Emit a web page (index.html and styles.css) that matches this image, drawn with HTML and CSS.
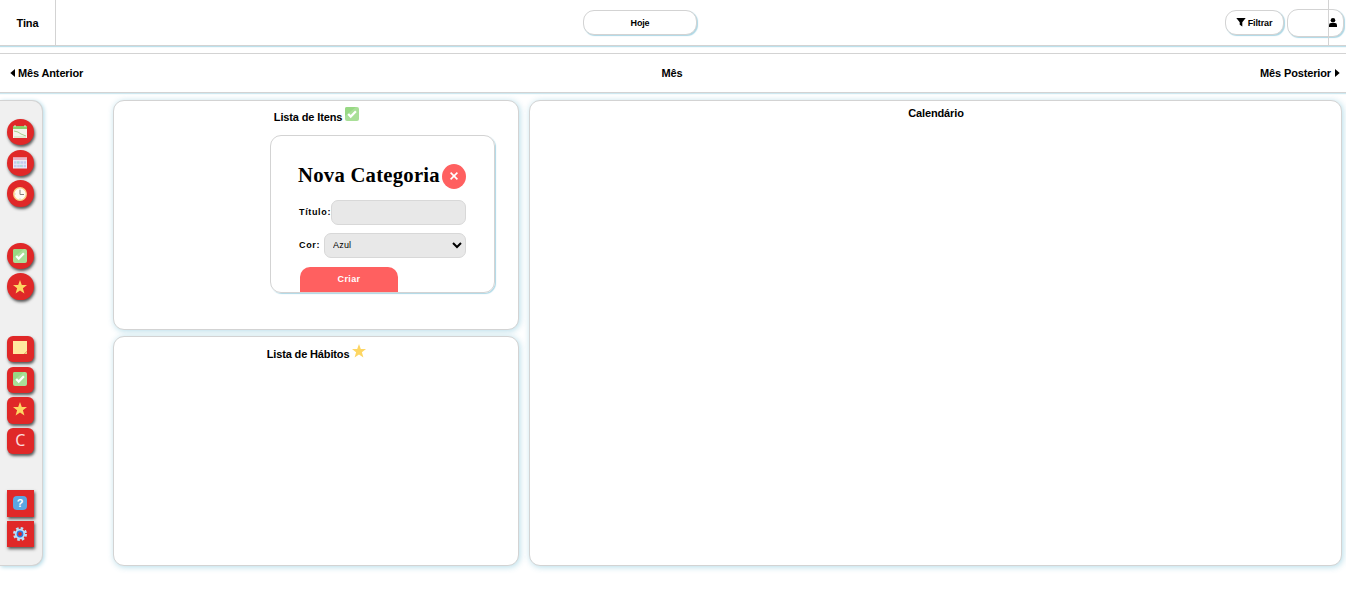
FILE: index.html
```html
<!DOCTYPE html>
<html lang="pt-BR">
<head>
<meta charset="utf-8">
<title>Agenda</title>
<link rel="stylesheet" href="styles.css">
</head>
<body>
<svg class="defs" aria-hidden="true">
  <symbol id="star" viewBox="0 0 14 14"><path fill="#fdd663" d="M7 0l1.800 4.900 5.200.2-4.100 3.200 1.500 5.200L7 10.500l-4.400 3 1.500-5.200L0 5.100l5.200-.2z"/></symbol>
  <symbol id="check" viewBox="0 0 14 14"><rect width="14" height="14" rx="2" fill="#a9df98"/><path d="M0 2a2 2 0 0 1 2-2h9L0 9z" fill="#98d884"/><path d="M3.200 7l2.500 2.600 5.200-5.400" fill="none" stroke="#fff" stroke-width="2.200"/></symbol>
</svg>
<header class="topbar">
  <div class="user">Tina</div>
  <button class="pill today">Hoje</button>
  <div class="actions">
    <button class="pill filter"><svg width="10" height="9" viewBox="0 0 10 9"><path d="M.3 0h9.400L6.300 4.200V8.500L3.700 6.800v-2.600z"/></svg>Filtrar</button>
    <button class="pill profile"><svg width="8" height="9" viewBox="0 0 8 9"><circle cx="4" cy="2.300" r="2.300"/><path d="M0 9V7.200Q0 5.200 2 5.100h4Q8 5.200 8 7.200V9z"/></svg></button>
    <span class="divider"></span>
  </div>
</header>
<nav class="months">
  <span class="prev"><svg width="5" height="8" viewBox="0 0 5 8"><path d="M5 0v8L.3 4z"/></svg>Mês Anterior</span>
  <span class="current">Mês</span>
  <span class="next">Mês Posterior<svg width="5" height="8" viewBox="0 0 5 8"><path d="M0 0v8l4.700-4z"/></svg></span>
</nav>
<main class="workspace">
  <aside class="sidebar">
    <div class="group">
      <button class="tool round"><svg viewBox="0 0 14 14"><path fill="#f4f4ec" d="M0 2h14v11H0z"/><path fill="#8bcf6b" d="M0 1h14v3H0z"/><path d="M2 0v2M12 0v2" stroke="#dceecb"/><path d="M1 6l4 1 3 2 5 2" fill="none" stroke="#a9d18d"/><path d="M1 12h12" stroke="#c9e3b4"/></svg></button>
      <button class="tool round"><svg viewBox="0 0 14 14"><path fill="#eceaf5" d="M0 1.500h14v11H0z"/><path fill="#e9b3c7" d="M0 1.500h14v2.500H0z"/><path d="M1 6.500h12M1 10h12" stroke="#c3cbef" stroke-width="2.400" stroke-dasharray="2.600 .6"/><path d="M4 5.500h2v2H4zM7 9h2v2H7z" fill="#aee0d9"/></svg></button>
      <button class="tool round"><svg viewBox="0 0 14 14"><circle cx="7" cy="7" r="6.300" fill="#fffaf0" stroke="#fbd184" stroke-width="1.300"/><path d="M7 3v4.500h4" fill="none" stroke="#88817d"/><path d="M7 1.500v1M7 11.500v1M1.500 7h1" stroke="#c4b9ac"/></svg></button>
    </div>
    <div class="group">
      <button class="tool round"><svg><use href="#check"/></svg></button>
      <button class="tool round"><svg><use href="#star"/></svg></button>
    </div>
    <div class="group">
      <button class="tool soft"><svg viewBox="0 0 14 14"><path fill="#ffe99f" d="M0 0h14v10l-3 3H0z"/><path fill="#e8d07f" d="M14 10v3h-3z"/></svg></button>
      <button class="tool soft"><svg><use href="#check"/></svg></button>
      <button class="tool soft"><svg><use href="#star"/></svg></button>
      <button class="tool soft letter">C</button>
    </div>
    <div class="group">
      <button class="tool"><svg viewBox="0 0 14 14"><rect width="14" height="14" rx="4" fill="#5ba7e2"/><text x="7" y="11" class="question">?</text></svg></button>
      <button class="tool"><svg viewBox="0 0 14 14"><circle cx="7" cy="7" r="5.800" fill="none" stroke="#b9e2fa" stroke-width="2.400" stroke-dasharray="2.500 2.055"/><circle cx="7" cy="7" r="4.300" fill="#2f78e0" stroke="#b9e2fa" stroke-width="1.800"/><circle cx="7" cy="7" r="1.900" fill="#e02828"/></svg></button>
    </div>
  </aside>
  <div class="lists">
    <section class="panel items">
      <h2 class="title">Lista de Itens <svg class="emoji"><use href="#check"/></svg></h2>
      <form class="dialog">
        <div class="dialog-head"><h1 class="heading">Nova Categoria</h1><button type="button" class="close"><svg width="8" height="8" viewBox="0 0 8 8"><path d="M.6.6l6.800 6.800M7.400.6L.6 7.400" stroke="#fff" stroke-width="1.600"/></svg></button></div>
        <label class="field"><span>Título:</span><input class="control" type="text"></label>
        <label class="field color"><span>Cor:</span><select class="control"><option>Azul</option></select></label>
        <button type="button" class="create">Criar</button>
      </form>
    </section>
    <section class="panel habits">
      <h2 class="title">Lista de Hábitos <svg class="emoji"><use href="#star"/></svg></h2>
    </section>
  </div>
  <section class="panel calendar"><h2 class="title">Calendário</h2></section>
</main>
</body>
</html>
```

FILE: styles.css
```css
* { box-sizing: border-box; }
body {
  margin: 0;
  height: 604px;
  overflow: hidden;
  background: #fff;
  color: #000;
  font: bold 11px/13px "Liberation Sans", Arial, sans-serif;
  letter-spacing: -.14px;
}
button { font: inherit; color: inherit; letter-spacing: inherit; padding: 0; border: 0; }
svg { flex: none; }
.defs { display: none; }

.topbar {
  display: grid;
  grid-template-columns: 56px 1fr 121px;
  height: 46px;
  border-bottom: 1px solid lightgray;
  box-shadow: 0 1px 1px rgba(173, 216, 230, .8);
}
.user {
  display: flex;
  align-items: center;
  justify-content: center;
  padding-top: 2px;
  border-right: 1px solid lightgray;
}
.pill {
  display: flex;
  align-items: center;
  justify-content: center;
  height: 25px;
  border: 1px solid lightgray;
  border-radius: 11px;
  background: #fff;
  box-shadow: 1px 1px 1px lightblue;
  font-size: 9px;
}
.today { width: 114px; margin: 10px 0 0 527px; padding-top: 1px; }
.actions { position: relative; display: flex; gap: 3px; }
.filter { width: 59px; margin-top: 10px; padding: 1px 1px 0 0; gap: 2px; }
.filter svg { margin-top: -2px; }
.profile {
  width: 57px;
  height: 28px;
  margin-top: 9px;
  justify-content: flex-end;
  padding: 0 6px 2px 0;
}
.divider {
  position: absolute;
  top: 0;
  right: 17px;
  width: 1px;
  height: 45px;
  background: lightgray;
}

.months {
  display: grid;
  grid-template-columns: 1fr auto 1fr;
  align-items: center;
  height: 40px;
  margin-top: 7px;
  padding: 0 6px 0 10px;
  border: solid lightgray;
  border-width: 1px 0;
  box-shadow: 0 1px 1px rgba(173, 216, 230, .6);
}
.months svg { margin-right: 3px; }
.next { text-align: right; }
.months .next svg { margin: 0 0 0 4px; }
.current { position: relative; left: -3px; }

.workspace {
  display: flex;
  height: 466px;
  margin-top: 7px;
}
.sidebar {
  display: flex;
  flex-direction: column;
  gap: 36px;
  width: 43px;
  padding: 18px 0 0 7px;
  border: 1px solid lightgray;
  border-left: 0;
  border-radius: 0 11px 11px 0;
  background: #f0f0f0;
  box-shadow: 1px 1px 4px lightblue;
}
.group { display: grid; row-gap: 4.300px; }
.tool {
  display: flex;
  align-items: center;
  justify-content: center;
  width: 26.600px;
  height: 26.400px;
  background: #e02828;
  box-shadow: 1px 2px 3px #555;
}
.tool svg { width: 14px; height: 14px; }
.round { border-radius: 50%; }
.soft { border-radius: 6px; }
.soft svg { margin-top: -2px; }
.letter { color: #fbdada; font: 16px/24px "Noto Sans", sans-serif; padding-bottom: 3px; }
.question { fill: #fff; font: bold 11px "Liberation Sans", sans-serif; text-anchor: middle; }

.lists {
  display: grid;
  grid-template-rows: 230px 230px;
  row-gap: 6px;
  margin-left: 70px;
  width: 406px;
}
.calendar { width: 813px; margin-left: 10px; }
.panel {
  border: 1px solid lightgray;
  border-radius: 11px;
  background: #fff;
  box-shadow: 1px 1px 6px rgba(173, 216, 230, .9);
}
.title { margin: 0; font: inherit; text-align: center; }
.emoji { width: 14px; height: 14px; }
.items .title { padding: 6px 0 0 1px; }
.habits .title { padding: 7px 0 0 1px; }
.calendar .title { padding: 6px 0 0 1px; }

.dialog {
  width: 225px;
  height: 158px;
  margin: 11px 0 0 156px;
  padding: 27px 28px 0 27px;
  border: 1px solid lightgray;
  border-radius: 11px;
  box-shadow: 1px 1px 1px lightblue;
  font-size: 9px;
  letter-spacing: .65px;
}
.dialog-head { display: flex; justify-content: space-between; width: 168px; height: 25px; }
.dialog-head .close { margin-top: 1px; }
.heading {
  margin: 0;
  white-space: nowrap;
  font: bold 20.700px/25px "Liberation Serif", "Times New Roman", serif;
  letter-spacing: .25px;
}
.close {
  display: flex;
  align-items: center;
  justify-content: center;
  width: 24px;
  height: 25px;
  flex: none;
  padding-bottom: 2px;
  border-radius: 50%;
  background: #ff6060;
}
.field { display: flex; align-items: center; width: 168px; height: 25px; margin-top: 12px; }
.field span { width: 33px; padding-left: 1px; white-space: nowrap; }
.field.color { margin-top: 8px; }
.field.color span { width: 26px; }
.control {
  flex: 1;
  min-width: 0;
  height: 25px;
  border: 1px solid #d8d8d8;
  border-radius: 7px;
  background: #e8e8e8;
  color: #000;
  font: 9px "Liberation Sans", Arial, sans-serif;
}
select.control { padding: 0 2px 1px 4px; letter-spacing: .2px; }
.create {
  display: block;
  width: 98px;
  height: 25px;
  margin: 9px 0 0 2px;
  border-radius: 10px 10px 0 0;
  background: #ff6060;
  color: #fff;
  letter-spacing: .4px;
}
```
